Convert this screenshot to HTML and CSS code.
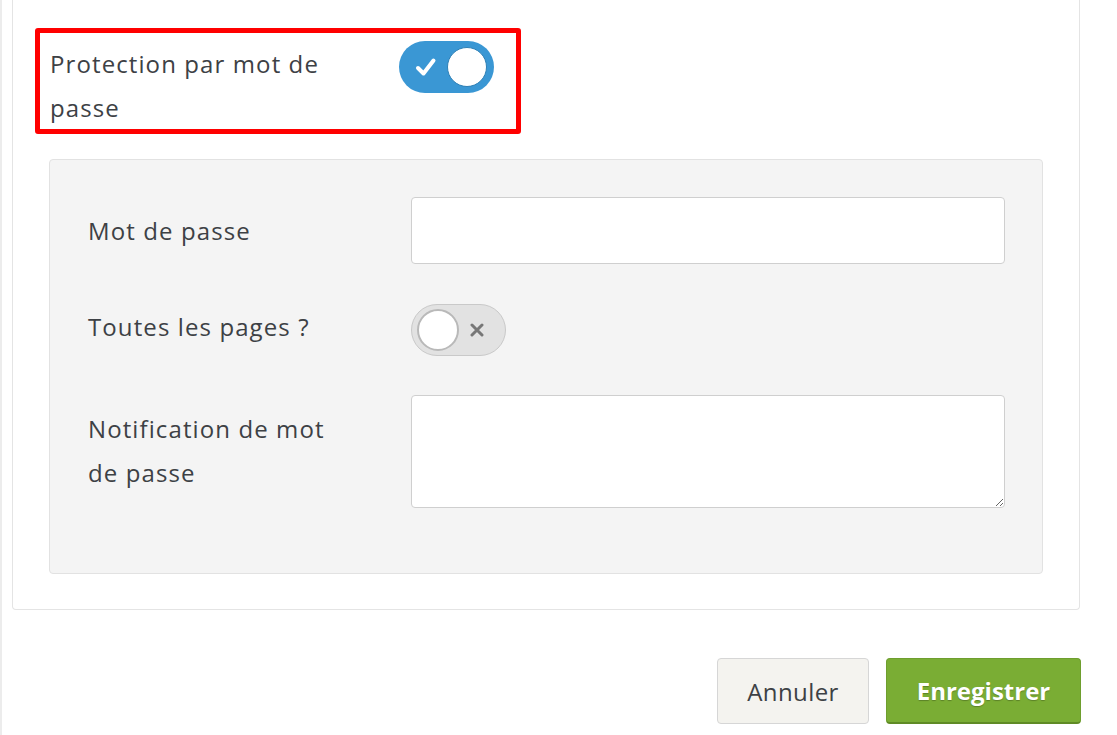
FILE: index.html
```html
<!DOCTYPE html>
<html lang="fr">
<head>
    <meta charset="UTF-8">
    <meta name="viewport" content="width=device-width, initial-scale=1.0">
    <title>Protection par mot de passe</title>
    <link rel="stylesheet" href="styles.css">
</head>
<body>
    <div class="page">
        <div class="card">
            <!-- highlighted setting -->
            <div class="highlight">
                <span class="highlight-label">Protection par mot de passe</span>
                <label class="switch switch-on">
                    <span class="switch-icon">
                        <svg width="22" height="20" viewBox="0 0 22 20"><path d="M3 11 L8.5 16.5 L18.5 3.5" fill="none" stroke="#fff" stroke-width="4" stroke-linecap="round" stroke-linejoin="round"/></svg>
                    </span>
                    <span class="knob"></span>
                </label>
            </div>

            <div class="panel">
                <div class="form-row">
                    <label class="form-label" for="password">Mot de passe</label>
                    <input class="form-input" type="password" id="password" name="password">
                </div>
                <div class="form-row form-row-switch">
                    <span class="form-label form-label-switch">Toutes les pages ?</span>
                    <label class="switch switch-off">
                        <span class="knob"></span>
                        <span class="switch-icon">
                            <svg width="14" height="14" viewBox="0 0 14 14"><path d="M2 2 L12 12 M12 2 L2 12" fill="none" stroke="#777" stroke-width="3" stroke-linecap="round"/></svg>
                        </span>
                    </label>
                </div>
                <div class="form-row form-row-last">
                    <label class="form-label" for="hint">Notification de mot de passe</label>
                    <textarea class="form-textarea" id="hint" name="hint"></textarea>
                </div>
            </div>
        </div>

        <div class="actions">
            <button type="button" class="btn btn-cancel">Annuler</button>
            <button type="submit" class="btn btn-save">Enregistrer</button>
        </div>
    </div>
</body>
</html>
```

FILE: styles.css
```css
* {
    box-sizing: border-box;
}
body {
    font-family: "Open Sans", Arial, sans-serif;
    font-size: 24px;
    color: #3d4145;
    background-color: #fff;
    margin: 0;
    border-left: 2px solid #ececec;
    min-height: 100vh;
}
.page {
    padding: 0 37px 0 10px;
}
.card {
    border: 1px solid #e4e4e4;
    border-top: none;
    border-radius: 0 0 4px 4px;
    padding: 28px 36px 35px 36px;
}
.highlight {
    display: flex;
    align-items: flex-start;
    width: 486px;
    height: 106px;
    margin-left: -14px;
    padding: 8px 10px 0 10px;
    border: 5px solid #ff0000;
    border-radius: 3px;
}
.highlight-label {
    width: 349px;
    padding: 1px 30px 0 0;
    line-height: 44px;
    letter-spacing: 1.1px;
}
.switch {
    position: relative;
    display: flex;
    align-items: center;
    width: 95px;
    height: 52px;
    border-radius: 26px;
    flex-shrink: 0;
}
.switch-on {
    background-color: #3a97d4;
    justify-content: space-between;
    padding: 0 7px 0 16px;
}
.switch-off {
    background-color: #e2e2e2;
    border: 1px solid #c9c9c9;
    padding: 0 0 0 5px;
}
.switch-icon {
    display: flex;
}
.switch-off .switch-icon {
    margin-left: 11px;
}
.knob {
    width: 40px;
    height: 40px;
    border-radius: 50%;
    background-color: #fff;
}
.switch-on .knob {
    border: 1px solid #2d7fb5;
}
.switch-off .knob {
    width: 42px;
    height: 42px;
    border: 2px solid #b9b9b9;
}
.panel {
    margin-top: 25px;
    background-color: #f4f4f4;
    border: 1px solid #e2e2e2;
    border-radius: 4px;
    padding: 37px 37px 65px 38px;
}
.form-row {
    display: flex;
    align-items: flex-start;
    margin-bottom: 40px;
}
.form-row-switch {
    margin-bottom: 39px;
}
.form-row-last {
    margin-bottom: 0;
}
.form-label {
    width: 323px;
    flex-shrink: 0;
    padding: 12px 60px 0 0;
    line-height: 44px;
    letter-spacing: 1.1px;
}
.form-label-switch {
    padding-top: 1px;
}
.form-input,
.form-textarea {
    display: block;
    width: 594px;
    background-color: #fff;
    border: 1px solid #cfcfcf;
    border-radius: 4px;
    font-family: inherit;
    font-size: 24px;
    padding: 8px 14px;
    margin: 0;
}
.form-input {
    height: 67px;
}
.form-textarea {
    height: 113px;
    resize: vertical;
}
.actions {
    display: flex;
    justify-content: flex-end;
    gap: 17px;
    margin: 48px -1px 0 0;
}
.btn {
    height: 66px;
    border-radius: 4px;
    font-family: inherit;
    font-size: 24px;
    cursor: pointer;
}
.btn-cancel {
    width: 152px;
    background-color: #f4f3ef;
    border: 1px solid #d6d6d6;
    color: #3d4145;
    letter-spacing: 0.4px;
}
.btn-save {
    width: 195px;
    background-color: #7aad34;
    border: 1px solid #6e9e2e;
    border-bottom: 2px solid #5f8a25;
    color: #fff;
    font-weight: 700;
    text-shadow: 0 1px 1px rgba(0, 0, 0, 0.25);
}
.btn-save:hover {
    background-color: #6e9e2e;
}
```
